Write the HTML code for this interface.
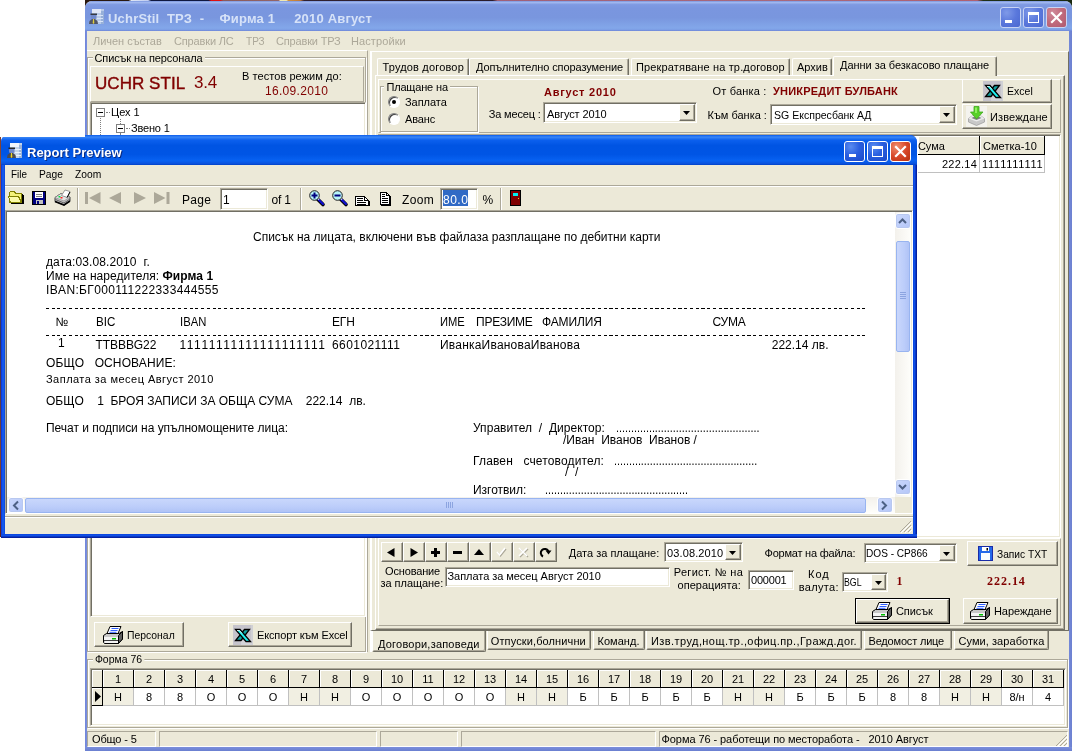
<!DOCTYPE html><html><head><meta charset="utf-8"><title>UchrStil</title><style>
html,body{margin:0;padding:0;}
body{width:1072px;height:751px;overflow:hidden;background:#fff;position:relative;font-family:"Liberation Sans",sans-serif;font-size:11px;color:#000;}
div,span.t{position:absolute;box-sizing:border-box;}
.t{white-space:pre;line-height:13px;font-size:11px;}
.raised{background:#ece9d8;border:1px solid;border-color:#fff #716f64 #716f64 #fff;box-shadow:inset -1px -1px 0 #aca899;}
.sunken{background:#fff;border:1px solid;border-color:#aca899 #fff #fff #aca899;box-shadow:inset 1px 1px 0 #716f64,inset -1px -1px 0 #ece9d8;}
.grp{border:1px solid #aca899;box-shadow:1px 1px 0 #fff, inset 1px 1px 0 #fff;}
.panel{border:1px solid;border-color:#fff #aca899 #aca899 #fff;}
.face{background:#ece9d8;}
.gl{background:#ece9d8;padding:0 2px;}
svg{position:absolute;overflow:visible;}
</style></head><body><div class="root" style="left:0;top:0;width:1072px;height:751px;will-change:transform;overflow:hidden;">
<div style="left:85px;top:0px;width:987px;height:8px;background:linear-gradient(90deg,#2a1810 0,#2a1810 4.4%,#dfe6f5 4.7%,#c0ccf0 6.4%,#101840 6.7%,#101840 12.5%,#e01010 12.8%,#e01010 13.7%,#8a5a5a 14%,#946468 19.6%,#f0e8b0 19.8%,#f0e8b0 20.4%,#d09040 20.6%,#c07838 21.8%,#302030 22.2%,#2a1c2c 41.3%,#a06078 41.8%,#a8687c 70%,#b06070 90.4%,#203018 91%,#182810 100%);"></div>
<div id="mainwin" style="left:85px;top:1px;width:987px;height:750px;background:#ece9d8;border-radius:7px 7px 0 0;"></div>
<div id="mtitle" style="left:85px;top:1px;width:987px;height:30px;border-radius:7px 7px 0 0;background:linear-gradient(180deg,#7b96df 0,#9fb6ee 5%,#7f9ae2 12%,#7a96df 25%,#7996de 55%,#82a6e9 88%,#80a4e8 94%,#6f86d8 100%);"></div>
<div style="left:85px;top:31px;width:2px;height:720px;background:linear-gradient(90deg,#7085d8,#7b90e0);"></div>
<div style="left:1069px;top:31px;width:3px;height:720px;background:linear-gradient(90deg,#7489d8,#6c80d0);"></div>
<div style="left:85px;top:747px;width:987px;height:4px;background:linear-gradient(180deg,#7b8fdc,#6a7fd0);"></div>
<svg style="left:89px;top:9px;opacity:0.85" width="16" height="16" viewBox="0 0 16 16"><rect x="3" y="0" width="12" height="15" fill="#c4d4ea"/><rect x="3" y="0" width="9" height="4" fill="#f2f6fc"/><rect x="12" y="2" width="3" height="13" fill="#9cb4d8"/><path d="M8 6.500H14M8 9.500H14M8 12.500H14" stroke="#eaf2fc" stroke-width="1"/><path d="M0 15 L0.500 12 L3 10 L6 10 L8.500 12 L9 15 Z" fill="#4a4a52"/><rect x="2" y="5" width="5.500" height="5" rx="1.500" fill="#7088c8"/><rect x="1.500" y="4.500" width="6.500" height="1.500" fill="#282828"/><path d="M4 10 L5 10 L5.300 14 L4.500 15 L3.700 14 Z" fill="#f0d820"/></svg>
<span id="mtitletext" class="t" style="left:108px;top:11px;font-size:13px;line-height:16px;font-weight:bold;letter-spacing:0.19px;color:#d6e2f8;">UchrStil  ТРЗ  -    Фирма 1     2010 Август</span>
<div style="left:1000px;top:7px;width:21px;height:21px;border:1px solid #c8d4f4;border-radius:3px;background:radial-gradient(circle at 30% 25%,#7f9ae8 0,#5a78dc 50%,#4a68d0 100%);"></div>
<div style="left:1005px;top:20px;width:7px;height:3px;background:#fff;"></div>
<div style="left:1023px;top:7px;width:21px;height:21px;border:1px solid #c8d4f4;border-radius:3px;background:radial-gradient(circle at 30% 25%,#7f9ae8 0,#5a78dc 50%,#4a68d0 100%);"></div>
<div style="left:1028px;top:12px;width:11px;height:11px;border:1px solid #fff;border-top-width:3px;"></div>
<div style="left:1046px;top:7px;width:21px;height:21px;border:1px solid #c8d4f4;border-radius:3px;background:radial-gradient(circle at 30% 25%,#cf8a9a 0,#c06a7c 50%,#b05a70 100%);"></div>
<svg style="left:1046px;top:7px" width="21" height="21" viewBox="0 0 21 21"><path d="M6 6 L15 15 M15 6 L6 15" stroke="#fff" stroke-width="2.200" stroke-linecap="square"/></svg>
<span class="t" style="left:93px;top:35px;letter-spacing:-0.03px;color:#aca899;">Личен състав</span>
<span class="t" style="left:174px;top:35px;letter-spacing:-0.15px;color:#aca899;">Справки ЛС</span>
<span class="t" style="left:246px;top:35px;transform-origin:0 0;transform:scaleX(0.9138);color:#aca899;">ТРЗ</span>
<span class="t" style="left:276px;top:35px;letter-spacing:-0.17px;color:#aca899;">Справки ТРЗ</span>
<span class="t" style="left:351px;top:35px;letter-spacing:0.1px;color:#aca899;">Настройки</span>
<div style="left:87px;top:50px;width:281px;height:602px;border-top:1px solid #fff;border-right:1px solid #aca899;"></div>
<div style="left:369.5px;top:51px;width:699.5px;height:580px;border-top:1px solid #fff;border-left:2px solid #fff;border-right:1px solid #716f64;border-bottom:1px solid #716f64;"></div>
<div style="left:369.5px;top:631px;width:2px;height:21px;background:#fff;"></div>
<div class="grp" style="left:87px;top:57px;width:279px;height:595px;"></div>
<span id="lg" class="t gl" style="left:92.5px;top:52px;letter-spacing:-0.11px;">Списък на персонала</span>
<div class="panel" style="left:90px;top:66px;width:274px;height:36px;"></div>
<span id="uchr" class="t" style="left:95px;top:74px;font-size:17px;line-height:20px;letter-spacing:0.05px;color:#800000;-webkit-text-stroke:0.400px #800000;">UCHR STIL</span>
<span id="v34" class="t" style="left:194px;top:73px;font-size:17px;line-height:20px;letter-spacing:-0.22px;color:#800000;">3.4</span>
<span id="vt" class="t" style="left:242px;top:70px;letter-spacing:0.06px;">В тестов режим до:</span>
<span id="dt" class="t" style="left:265px;top:84px;font-size:12px;line-height:14px;letter-spacing:0.31px;color:#800000;">16.09.2010</span>
<div class="sunken" style="left:90px;top:102px;width:276px;height:515px;"></div>
<div style="left:96px;top:108px;width:9px;height:9px;border:1px solid #808080;background:#fff;"></div>
<div style="left:98px;top:112px;width:5px;height:1px;background:#000;"></div>
<span id="ceh" class="t" style="left:111px;top:106px;">Цех 1</span>
<div style="left:116px;top:124px;width:9px;height:9px;border:1px solid #808080;background:#fff;"></div>
<div style="left:118px;top:128px;width:5px;height:1px;background:#000;"></div>
<span id="zv" class="t" style="left:131px;top:122px;letter-spacing:-0.18px;">Звено 1</span>
<div style="left:106px;top:112px;width:4px;height:1px;border-top:1px dotted #808080;"></div>
<div style="left:126px;top:128px;width:4px;height:1px;border-top:1px dotted #808080;"></div>
<div style="left:100px;top:118px;width:1px;height:17px;border-left:1px dotted #808080;"></div>
<div style="left:120px;top:119px;width:1px;height:5px;border-left:1px dotted #808080;"></div>
<div style="left:120px;top:133px;width:1px;height:2px;border-left:1px dotted #808080;"></div>
<div class="raised" style="left:94px;top:622px;width:90px;height:25px;"></div>
<div class="raised" style="left:228px;top:622px;width:124px;height:25px;"></div>
<svg style="left:103px;top:626px" width="20" height="18" viewBox="0 0 20 18"><path d="M0.500 9.500 L3.500 7.500 H16 L19.500 5.500 V13 L15.500 17.500 H1.500 L0.500 16.500 Z" fill="#c8c8c8" stroke="#000"/><path d="M15.500 9.500 L19.500 5.500 V13 L15.500 17.500 Z" fill="#606060" stroke="#000"/><rect x="1" y="11" width="14" height="3" fill="#f4f4f4"/><rect x="9" y="12" width="4" height="1.500" fill="#00c000"/><path d="M1 14.500H15" stroke="#404040"/><rect x="2" y="15" width="13" height="2" fill="#f4f4f4"/><path d="M7 0.500 H18 L15 7.500 H4 Z" fill="#fff" stroke="#000"/><path d="M8.500 2.500H15.500M7.500 4.500H14.500M6.500 6.300H13.500" stroke="#3060ff"/></svg>
<span id="pers" class="t" style="left:127px;top:629px;transform-origin:0 0;transform:scaleX(0.9445);">Персонал</span>
<svg style="left:233px;top:625px" width="20" height="20" viewBox="0 0 20 20"><rect x="0" y="0" width="20" height="20" fill="#c6c4cc"/><rect x="8" y="16" width="12" height="4" fill="#d4d4d8"/><rect x="18" y="0" width="2" height="20" fill="#d0d0d4"/><path d="M11.500 4.500 H16.500 L8 15.500 H2.500 Z" fill="#10a0a0" stroke="#000" stroke-width="1.300"/><path d="M2.500 4.500 H7 L17.500 16.500 H13 Z" fill="#20f0f0" stroke="#000" stroke-width="1.300"/><path d="M4 5.500 H6.500 L9 8.500" stroke="#fff" stroke-width="0.800" fill="none"/></svg>
<span id="exp" class="t" style="left:257px;top:629px;letter-spacing:-0.14px;">Експорт към Excel</span>
<div id="tabpage" class="face" style="left:375px;top:75px;width:690px;height:555px;border:1px solid;border-color:#fff #716f64 #716f64 #fff;box-shadow:inset -1px -1px 0 #aca899;"></div>
<div style="left:377px;top:58px;width:92px;height:17px;background:#ece9d8;border:1px solid;border-color:#fff #716f64 #ece9d8 #fff;border-bottom:none;border-radius:2px 2px 0 0;box-shadow:inset -1px 0 0 #aca899;"></div>
<span class="t" style="left:382.5px;top:61px;letter-spacing:0.17px;z-index:3;">Трудов договор</span>
<div style="left:469px;top:58px;width:160px;height:17px;background:#ece9d8;border:1px solid;border-color:#fff #716f64 #ece9d8 #fff;border-bottom:none;border-radius:2px 2px 0 0;box-shadow:inset -1px 0 0 #aca899;"></div>
<span class="t" style="left:476px;top:61px;letter-spacing:-0.1px;z-index:3;">Допълнително споразумение</span>
<div style="left:631px;top:58px;width:159px;height:17px;background:#ece9d8;border:1px solid;border-color:#fff #716f64 #ece9d8 #fff;border-bottom:none;border-radius:2px 2px 0 0;box-shadow:inset -1px 0 0 #aca899;"></div>
<span class="t" style="left:636px;top:61px;letter-spacing:0.15px;z-index:3;">Прекратяване на тр.договор</span>
<div style="left:792px;top:58px;width:40px;height:17px;background:#ece9d8;border:1px solid;border-color:#fff #716f64 #ece9d8 #fff;border-bottom:none;border-radius:2px 2px 0 0;box-shadow:inset -1px 0 0 #aca899;"></div>
<span class="t" style="left:797px;top:61px;z-index:3;">Архив</span>
<div style="left:833px;top:56px;width:164px;height:20px;background:#ece9d8;border:1px solid;border-color:#fff #716f64 #ece9d8 #fff;border-bottom:none;border-radius:2px 2px 0 0;box-shadow:inset -1px 0 0 #aca899;z-index:2;"></div>
<span class="t" style="left:840px;top:59px;letter-spacing:-0.03px;z-index:3;">Данни за безкасово плащане</span>
<div class="panel" style="left:378px;top:79px;width:683px;height:54px;"></div>
<div class="grp" style="left:379.5px;top:86px;width:98.5px;height:45.5px;"></div>
<span id="pl" class="t gl" style="left:384.4px;top:81px;letter-spacing:-0.16px;">Плащане на</span>
<div style="left:388px;top:96px;width:12px;height:12px;border-radius:50%;background:#fff;border:1px solid;border-color:#808080 #fff #fff #808080;box-shadow:inset 1px 1px 0 #404040;"></div>
<div style="left:392px;top:100px;width:4px;height:4px;border-radius:50%;background:#000;"></div>
<span class="t" style="left:405px;top:96px;letter-spacing:-0.05px;">Заплата</span>
<div style="left:388px;top:113px;width:12px;height:12px;border-radius:50%;background:#fff;border:1px solid;border-color:#808080 #fff #fff #808080;box-shadow:inset 1px 1px 0 #404040;"></div>
<span class="t" style="left:405px;top:113px;letter-spacing:-0.12px;">Аванс</span>
<span id="zam" class="t" style="left:488.75px;top:108px;letter-spacing:-0.17px;">За месец :</span>
<span id="avg" class="t" style="left:544px;top:86px;font-weight:bold;letter-spacing:0.76px;color:#800000;">Август 2010</span>
<div class="sunken" style="left:543px;top:102px;width:154px;height:21px;"></div>
<span class="t" style="left:547px;top:108px;letter-spacing:-0.09px;">Август 2010</span>
<div class="raised" style="left:679px;top:104px;width:16px;height:17px;"></div>
<svg style="left:683px;top:111px" width="7" height="4" viewBox="0 0 7 4"><path d="M0 0H7L3.500 4Z" fill="#000"/></svg>
<span id="otb" class="t" style="left:712.5px;top:85px;letter-spacing:0.17px;">От банка :</span>
<span id="uni" class="t" style="left:773px;top:85px;font-weight:bold;letter-spacing:0.21px;color:#800000;">УНИКРЕДИТ БУЛБАНК</span>
<span id="kum" class="t" style="left:707.5px;top:109px;">Към банка :</span>
<div class="sunken" style="left:770px;top:104px;width:187px;height:21px;"></div>
<span class="t" style="left:774px;top:109px;transform-origin:0 0;transform:scaleX(0.9583);">SG Експресбанк АД</span>
<div class="raised" style="left:939px;top:106px;width:16px;height:17px;"></div>
<svg style="left:943px;top:113px" width="7" height="4" viewBox="0 0 7 4"><path d="M0 0H7L3.500 4Z" fill="#000"/></svg>
<div class="raised" style="left:962px;top:79px;width:90px;height:24px;"></div>
<svg style="left:983px;top:81px" width="20" height="20" viewBox="0 0 20 20"><rect x="0" y="0" width="20" height="20" fill="#c6c4cc"/><rect x="8" y="16" width="12" height="4" fill="#d4d4d8"/><rect x="18" y="0" width="2" height="20" fill="#d0d0d4"/><path d="M11.500 4.500 H16.500 L8 15.500 H2.500 Z" fill="#10a0a0" stroke="#000" stroke-width="1.300"/><path d="M2.500 4.500 H7 L17.500 16.500 H13 Z" fill="#20f0f0" stroke="#000" stroke-width="1.300"/><path d="M4 5.500 H6.500 L9 8.500" stroke="#fff" stroke-width="0.800" fill="none"/></svg>
<span class="t" style="left:1006.5px;top:85px;transform-origin:0 0;transform:scaleX(0.9565);">Excel</span>
<div class="raised" style="left:962px;top:104px;width:90px;height:25px;"></div>
<svg style="left:966px;top:106px" width="21" height="21" viewBox="0 0 21 21"><rect width="21" height="21" fill="#f4f3ee"/><path d="M2.500 12.500 L6 10 H15 L18.500 12.500 V16 L10.500 19.500 L2.500 16 Z" fill="#c8c8c8" stroke="#a0a0a0" stroke-width="0.800"/><path d="M2.500 12.500 L10.500 15.500 L18.500 12.500 L15 10 H6 Z" fill="#ececec"/><path d="M5.500 12 L10.500 14 L15.500 12 L13.500 11 H7.500 Z" fill="#808080"/><path d="M8 0.500 H13 V6 H17 L10.500 13 L4.500 6 H8 Z" fill="#58d028" stroke="#40a820" stroke-width="0.800"/><path d="M9 1.500 H11 V7 H9 Z" fill="#90f060"/></svg>
<span class="t" style="left:990px;top:111px;letter-spacing:0.12px;">Извеждане</span>
<div id="grid1" class="sunken" style="left:378px;top:134px;width:683px;height:404px;"></div>
<div style="left:918px;top:136px;width:62px;height:19px;background:#ece9d8;border:1px solid #000;border-top:none;border-left:none;box-shadow:inset 1px 1px 0 #fff;"></div>
<div style="left:980px;top:136px;width:65px;height:19px;background:#ece9d8;border:1px solid #000;border-top:none;border-left:none;box-shadow:inset 1px 1px 0 #fff;"></div>
<span class="t" style="left:918px;top:140px;letter-spacing:-0.08px;">Сума</span>
<span class="t" style="left:983px;top:140px;letter-spacing:0.05px;">Сметка-10</span>
<div style="left:918px;top:155px;width:62px;height:18px;border-right:1px solid #c0c0c0;border-bottom:1px solid #c0c0c0;"></div>
<div style="left:980px;top:155px;width:65px;height:18px;border-right:1px solid #c0c0c0;border-bottom:1px solid #c0c0c0;"></div>
<span class="t" style="left:942px;top:158px;letter-spacing:0.22px;">222.14</span>
<span class="t" style="left:982px;top:158px;letter-spacing:0.76px;">1111111111</span>
<div class="panel" style="left:378px;top:538px;width:683px;height:88px;"></div>
<div class="raised" style="left:380.5px;top:542px;width:22px;height:20px;"></div>
<svg style="left:387px;top:548px" width="9" height="9"><path d="M7.500 0V9L0 4.500Z" fill="#000"/></svg>
<div class="raised" style="left:402.5px;top:542px;width:22px;height:20px;"></div>
<svg style="left:409px;top:548px" width="9" height="9"><path d="M1.500 0V9L9 4.500Z" fill="#000"/></svg>
<div class="raised" style="left:424.5px;top:542px;width:22px;height:20px;"></div>
<div style="left:431px;top:551px;width:9px;height:3px;background:#000;"></div>
<div style="left:434px;top:548px;width:3px;height:9px;background:#000;"></div>
<div class="raised" style="left:446.5px;top:542px;width:22px;height:20px;"></div>
<div style="left:453px;top:551px;width:9px;height:3px;background:#000;"></div>
<div class="raised" style="left:468.5px;top:542px;width:22px;height:20px;"></div>
<svg style="left:474px;top:549px" width="10" height="6"><path d="M0 6H10L5 0Z" fill="#000"/></svg>
<div class="raised" style="left:490.5px;top:542px;width:22px;height:20px;"></div>
<svg style="left:496px;top:547px" width="12" height="11"><path d="M2 6L4.500 9L10 2" stroke="#aca899" stroke-width="1.400" fill="none"/><path d="M1 5L3.500 8L9 1" stroke="#fff" stroke-width="1.600" fill="none"/></svg>
<div class="raised" style="left:512.5px;top:542px;width:22px;height:20px;"></div>
<svg style="left:518px;top:547px" width="12" height="12"><path d="M2 2L10 10M10 2L2 10" stroke="#aca899" stroke-width="1.400" fill="none"/><path d="M1 1L9 9M9 1L1 9" stroke="#fff" stroke-width="1.600" fill="none"/></svg>
<div class="raised" style="left:534.5px;top:542px;width:22px;height:20px;"></div>
<svg style="left:539px;top:546px" width="13" height="12" viewBox="0 0 13 12"><path d="M4 10.500A4 4 0 1 1 9.500 5.500" stroke="#000" stroke-width="2" fill="none"/><path d="M6.500 4.500H12.500L9.500 8.500Z" fill="#000"/></svg>
<span id="dzp" class="t" style="left:568.75px;top:547px;">Дата за плащане:</span>
<div class="sunken" style="left:663.5px;top:542px;width:79.5px;height:20px;"></div>
<span class="t" style="left:667px;top:547px;letter-spacing:0.13px;">03.08.2010</span>
<div class="raised" style="left:725px;top:544px;width:16px;height:16px;"></div>
<svg style="left:729px;top:551px" width="7" height="4" viewBox="0 0 7 4"><path d="M0 0H7L3.500 4Z" fill="#000"/></svg>
<span id="fnf" class="t" style="left:764.5px;top:547px;letter-spacing:-0.22px;">Формат на файла:</span>
<div class="sunken" style="left:863.5px;top:543px;width:93.5px;height:20px;"></div>
<span class="t" style="left:866px;top:547px;transform-origin:0 0;transform:scaleX(0.9171);">DOS - CP866</span>
<div class="raised" style="left:939px;top:545px;width:16px;height:16px;"></div>
<svg style="left:943px;top:552px" width="7" height="4" viewBox="0 0 7 4"><path d="M0 0H7L3.500 4Z" fill="#000"/></svg>
<div class="raised" style="left:966.5px;top:541px;width:91px;height:24.5px;"></div>
<svg style="left:978px;top:546px" width="15" height="15" viewBox="0 0 15 15"><rect x="0.500" y="0.500" width="14" height="14" fill="#2468ea" stroke="#1a2ca8"/><rect x="4" y="1" width="7" height="4" fill="#fff"/><rect x="8.500" y="2" width="1.500" height="2.500" fill="#000"/><rect x="3" y="7" width="9" height="7" fill="#fafcff"/></svg>
<span id="ztxt" class="t" style="left:996.5px;top:548px;transform-origin:0 0;transform:scaleX(0.9264);">Запис ТХТ</span>
<span id="osn1" class="t" style="left:385px;top:565px;letter-spacing:-0.15px;">Основание</span>
<span id="osn2" class="t" style="left:380.5px;top:577px;letter-spacing:-0.04px;">за плащане:</span>
<div class="sunken" style="left:445px;top:567px;width:225px;height:20px;"></div>
<span class="t" style="left:447.5px;top:570px;letter-spacing:-0.05px;">Заплата за месец Август 2010</span>
<span class="t" style="left:673.75px;top:566px;letter-spacing:0.31px;">Регист. № на</span>
<span class="t" style="left:677.5px;top:579px;letter-spacing:0.03px;">операцията:</span>
<div class="sunken" style="left:747.5px;top:570px;width:46.5px;height:20px;"></div>
<span class="t" style="left:751px;top:574px;letter-spacing:-0.2px;">000001</span>
<span class="t" style="left:808px;top:568px;letter-spacing:1.03px;">Код</span>
<span class="t" style="left:798.75px;top:581px;letter-spacing:0.32px;">валута:</span>
<div class="sunken" style="left:841.5px;top:572px;width:46.5px;height:20px;"></div>
<span class="t" style="left:844px;top:576px;transform-origin:0 0;transform:scaleX(0.7996);">BGL</span>
<div class="raised" style="left:871px;top:574px;width:15px;height:16px;"></div>
<svg style="left:875px;top:581px" width="7" height="4" viewBox="0 0 7 4"><path d="M0 0H7L3.500 4Z" fill="#000"/></svg>
<span class="t" style="left:896.5px;top:574px;font-size:12px;line-height:14px;font-weight:bold;font-family:'Liberation Serif',serif;color:#800000;">1</span>
<span class="t" style="left:987px;top:574px;font-size:12px;line-height:14px;font-weight:bold;font-family:'Liberation Serif',serif;letter-spacing:0.97px;color:#800000;">222.14</span>
<div style="left:855px;top:598px;width:95px;height:25.5px;border:1px solid #000;background:#ece9d8;"></div>
<div class="raised" style="left:856px;top:599px;width:93px;height:23.5px;"></div>
<svg style="left:872px;top:602px" width="20" height="18" viewBox="0 0 20 18"><path d="M0.500 9.500 L3.500 7.500 H16 L19.500 5.500 V13 L15.500 17.500 H1.500 L0.500 16.500 Z" fill="#c8c8c8" stroke="#000"/><path d="M15.500 9.500 L19.500 5.500 V13 L15.500 17.500 Z" fill="#606060" stroke="#000"/><rect x="1" y="11" width="14" height="3" fill="#f4f4f4"/><rect x="9" y="12" width="4" height="1.500" fill="#00c000"/><path d="M1 14.500H15" stroke="#404040"/><rect x="2" y="15" width="13" height="2" fill="#f4f4f4"/><path d="M7 0.500 H18 L15 7.500 H4 Z" fill="#fff" stroke="#000"/><path d="M8.500 2.500H15.500M7.500 4.500H14.500M6.500 6.300H13.500" stroke="#3060ff"/></svg>
<span class="t" style="left:896px;top:605px;letter-spacing:-0.09px;">Списък</span>
<div class="raised" style="left:962.75px;top:598px;width:95px;height:25.5px;"></div>
<svg style="left:970px;top:602px" width="20" height="18" viewBox="0 0 20 18"><path d="M0.500 9.500 L3.500 7.500 H16 L19.500 5.500 V13 L15.500 17.500 H1.500 L0.500 16.500 Z" fill="#c8c8c8" stroke="#000"/><path d="M15.500 9.500 L19.500 5.500 V13 L15.500 17.500 Z" fill="#606060" stroke="#000"/><rect x="1" y="11" width="14" height="3" fill="#f4f4f4"/><rect x="9" y="12" width="4" height="1.500" fill="#00c000"/><path d="M1 14.500H15" stroke="#404040"/><rect x="2" y="15" width="13" height="2" fill="#f4f4f4"/><path d="M7 0.500 H18 L15 7.500 H4 Z" fill="#fff" stroke="#000"/><path d="M8.500 2.500H15.500M7.500 4.500H14.500M6.500 6.300H13.500" stroke="#3060ff"/></svg>
<span class="t" style="left:994px;top:605px;letter-spacing:-0.07px;">Нареждане</span>
<div style="left:371.5px;top:631px;width:114.5px;height:21px;background:#ece9d8;border:1px solid;border-color:#ece9d8 #716f64 #716f64 #fff;border-top:none;border-radius:0 0 2px 2px;box-shadow:inset -1px -1px 0 #aca899;z-index:2;"></div>
<span class="t" style="left:378px;top:638px;letter-spacing:0.21px;z-index:3;">Договори,заповеди</span>
<div style="left:487px;top:631px;width:104px;height:19px;background:#ece9d8;border:1px solid;border-color:#ece9d8 #716f64 #716f64 #fff;border-top:none;border-radius:0 0 2px 2px;box-shadow:inset -1px -1px 0 #aca899;"></div>
<span class="t" style="left:490.75px;top:635px;letter-spacing:0.12px;z-index:3;">Отпуски,болнични</span>
<div style="left:592.5px;top:631px;width:52px;height:19px;background:#ece9d8;border:1px solid;border-color:#ece9d8 #716f64 #716f64 #fff;border-top:none;border-radius:0 0 2px 2px;box-shadow:inset -1px -1px 0 #aca899;"></div>
<span class="t" style="left:597.5px;top:635px;letter-spacing:0.04px;z-index:3;">Команд.</span>
<div style="left:646px;top:631px;width:215.5px;height:19px;background:#ece9d8;border:1px solid;border-color:#ece9d8 #716f64 #716f64 #fff;border-top:none;border-radius:0 0 2px 2px;box-shadow:inset -1px -1px 0 #aca899;"></div>
<span class="t" style="left:651px;top:635px;letter-spacing:0.43px;z-index:3;">Изв.труд,нощ.тр.,офиц.пр.,Гражд.дог.</span>
<div style="left:864px;top:631px;width:87.5px;height:19px;background:#ece9d8;border:1px solid;border-color:#ece9d8 #716f64 #716f64 #fff;border-top:none;border-radius:0 0 2px 2px;box-shadow:inset -1px -1px 0 #aca899;"></div>
<span class="t" style="left:868.5px;top:635px;letter-spacing:-0.18px;z-index:3;">Ведомост лице</span>
<div style="left:954px;top:631px;width:95px;height:19px;background:#ece9d8;border:1px solid;border-color:#ece9d8 #716f64 #716f64 #fff;border-top:none;border-radius:0 0 2px 2px;box-shadow:inset -1px -1px 0 #aca899;"></div>
<span class="t" style="left:958.5px;top:635px;letter-spacing:0.06px;z-index:3;">Суми, заработка</span>
<div class="grp" style="left:87px;top:659px;width:981px;height:69px;"></div>
<span id="f76" class="t gl" style="left:92.5px;top:653px;transform-origin:0 0;transform:scaleX(0.9521);">Форма 76</span>
<div class="sunken" style="left:90px;top:668px;width:976px;height:58px;"></div>
<div style="left:92px;top:670px;width:11px;height:18px;background:#ece9d8;border-right:1px solid #000;border-bottom:1px solid #000;box-shadow:inset 1px 1px 0 #fff;"></div>
<div style="left:92px;top:688px;width:11px;height:18px;background:#ece9d8;border-right:1px solid #000;border-bottom:1px solid #000;box-shadow:inset 1px 1px 0 #fff;"></div>
<svg style="left:95px;top:691px" width="6" height="11"><path d="M0 0V11L6 5.500Z" fill="#000"/></svg>
<div style="left:103px;top:670px;width:31px;height:18px;background:#ece9d8;border-right:1px solid #000;border-bottom:1px solid #000;box-shadow:inset 1px 1px 0 #fff;text-align:center;line-height:18px;">1</div>
<div style="left:103px;top:688px;width:31px;height:18px;background:#f1efe2;border-right:1px solid #c0c0c0;border-bottom:1px solid #c0c0c0;text-align:center;line-height:19px;">Н</div>
<div style="left:134px;top:670px;width:31px;height:18px;background:#ece9d8;border-right:1px solid #000;border-bottom:1px solid #000;box-shadow:inset 1px 1px 0 #fff;text-align:center;line-height:18px;">2</div>
<div style="left:134px;top:688px;width:31px;height:18px;background:#fff;border-right:1px solid #c0c0c0;border-bottom:1px solid #c0c0c0;text-align:center;line-height:19px;">8</div>
<div style="left:165px;top:670px;width:31px;height:18px;background:#ece9d8;border-right:1px solid #000;border-bottom:1px solid #000;box-shadow:inset 1px 1px 0 #fff;text-align:center;line-height:18px;">3</div>
<div style="left:165px;top:688px;width:31px;height:18px;background:#fff;border-right:1px solid #c0c0c0;border-bottom:1px solid #c0c0c0;text-align:center;line-height:19px;">8</div>
<div style="left:196px;top:670px;width:31px;height:18px;background:#ece9d8;border-right:1px solid #000;border-bottom:1px solid #000;box-shadow:inset 1px 1px 0 #fff;text-align:center;line-height:18px;">4</div>
<div style="left:196px;top:688px;width:31px;height:18px;background:#fff;border-right:1px solid #c0c0c0;border-bottom:1px solid #c0c0c0;text-align:center;line-height:19px;">О</div>
<div style="left:227px;top:670px;width:31px;height:18px;background:#ece9d8;border-right:1px solid #000;border-bottom:1px solid #000;box-shadow:inset 1px 1px 0 #fff;text-align:center;line-height:18px;">5</div>
<div style="left:227px;top:688px;width:31px;height:18px;background:#fff;border-right:1px solid #c0c0c0;border-bottom:1px solid #c0c0c0;text-align:center;line-height:19px;">О</div>
<div style="left:258px;top:670px;width:31px;height:18px;background:#ece9d8;border-right:1px solid #000;border-bottom:1px solid #000;box-shadow:inset 1px 1px 0 #fff;text-align:center;line-height:18px;">6</div>
<div style="left:258px;top:688px;width:31px;height:18px;background:#fff;border-right:1px solid #c0c0c0;border-bottom:1px solid #c0c0c0;text-align:center;line-height:19px;">О</div>
<div style="left:289px;top:670px;width:31px;height:18px;background:#ece9d8;border-right:1px solid #000;border-bottom:1px solid #000;box-shadow:inset 1px 1px 0 #fff;text-align:center;line-height:18px;">7</div>
<div style="left:289px;top:688px;width:31px;height:18px;background:#f1efe2;border-right:1px solid #c0c0c0;border-bottom:1px solid #c0c0c0;text-align:center;line-height:19px;">Н</div>
<div style="left:320px;top:670px;width:31px;height:18px;background:#ece9d8;border-right:1px solid #000;border-bottom:1px solid #000;box-shadow:inset 1px 1px 0 #fff;text-align:center;line-height:18px;">8</div>
<div style="left:320px;top:688px;width:31px;height:18px;background:#f1efe2;border-right:1px solid #c0c0c0;border-bottom:1px solid #c0c0c0;text-align:center;line-height:19px;">Н</div>
<div style="left:351px;top:670px;width:31px;height:18px;background:#ece9d8;border-right:1px solid #000;border-bottom:1px solid #000;box-shadow:inset 1px 1px 0 #fff;text-align:center;line-height:18px;">9</div>
<div style="left:351px;top:688px;width:31px;height:18px;background:#fff;border-right:1px solid #c0c0c0;border-bottom:1px solid #c0c0c0;text-align:center;line-height:19px;">О</div>
<div style="left:382px;top:670px;width:31px;height:18px;background:#ece9d8;border-right:1px solid #000;border-bottom:1px solid #000;box-shadow:inset 1px 1px 0 #fff;text-align:center;line-height:18px;">10</div>
<div style="left:382px;top:688px;width:31px;height:18px;background:#fff;border-right:1px solid #c0c0c0;border-bottom:1px solid #c0c0c0;text-align:center;line-height:19px;">О</div>
<div style="left:413px;top:670px;width:31px;height:18px;background:#ece9d8;border-right:1px solid #000;border-bottom:1px solid #000;box-shadow:inset 1px 1px 0 #fff;text-align:center;line-height:18px;">11</div>
<div style="left:413px;top:688px;width:31px;height:18px;background:#fff;border-right:1px solid #c0c0c0;border-bottom:1px solid #c0c0c0;text-align:center;line-height:19px;">О</div>
<div style="left:444px;top:670px;width:31px;height:18px;background:#ece9d8;border-right:1px solid #000;border-bottom:1px solid #000;box-shadow:inset 1px 1px 0 #fff;text-align:center;line-height:18px;">12</div>
<div style="left:444px;top:688px;width:31px;height:18px;background:#fff;border-right:1px solid #c0c0c0;border-bottom:1px solid #c0c0c0;text-align:center;line-height:19px;">О</div>
<div style="left:475px;top:670px;width:31px;height:18px;background:#ece9d8;border-right:1px solid #000;border-bottom:1px solid #000;box-shadow:inset 1px 1px 0 #fff;text-align:center;line-height:18px;">13</div>
<div style="left:475px;top:688px;width:31px;height:18px;background:#fff;border-right:1px solid #c0c0c0;border-bottom:1px solid #c0c0c0;text-align:center;line-height:19px;">О</div>
<div style="left:506px;top:670px;width:31px;height:18px;background:#ece9d8;border-right:1px solid #000;border-bottom:1px solid #000;box-shadow:inset 1px 1px 0 #fff;text-align:center;line-height:18px;">14</div>
<div style="left:506px;top:688px;width:31px;height:18px;background:#f1efe2;border-right:1px solid #c0c0c0;border-bottom:1px solid #c0c0c0;text-align:center;line-height:19px;">Н</div>
<div style="left:537px;top:670px;width:31px;height:18px;background:#ece9d8;border-right:1px solid #000;border-bottom:1px solid #000;box-shadow:inset 1px 1px 0 #fff;text-align:center;line-height:18px;">15</div>
<div style="left:537px;top:688px;width:31px;height:18px;background:#f1efe2;border-right:1px solid #c0c0c0;border-bottom:1px solid #c0c0c0;text-align:center;line-height:19px;">Н</div>
<div style="left:568px;top:670px;width:31px;height:18px;background:#ece9d8;border-right:1px solid #000;border-bottom:1px solid #000;box-shadow:inset 1px 1px 0 #fff;text-align:center;line-height:18px;">16</div>
<div style="left:568px;top:688px;width:31px;height:18px;background:#fff;border-right:1px solid #c0c0c0;border-bottom:1px solid #c0c0c0;text-align:center;line-height:19px;">Б</div>
<div style="left:599px;top:670px;width:31px;height:18px;background:#ece9d8;border-right:1px solid #000;border-bottom:1px solid #000;box-shadow:inset 1px 1px 0 #fff;text-align:center;line-height:18px;">17</div>
<div style="left:599px;top:688px;width:31px;height:18px;background:#fff;border-right:1px solid #c0c0c0;border-bottom:1px solid #c0c0c0;text-align:center;line-height:19px;">Б</div>
<div style="left:630px;top:670px;width:31px;height:18px;background:#ece9d8;border-right:1px solid #000;border-bottom:1px solid #000;box-shadow:inset 1px 1px 0 #fff;text-align:center;line-height:18px;">18</div>
<div style="left:630px;top:688px;width:31px;height:18px;background:#fff;border-right:1px solid #c0c0c0;border-bottom:1px solid #c0c0c0;text-align:center;line-height:19px;">Б</div>
<div style="left:661px;top:670px;width:31px;height:18px;background:#ece9d8;border-right:1px solid #000;border-bottom:1px solid #000;box-shadow:inset 1px 1px 0 #fff;text-align:center;line-height:18px;">19</div>
<div style="left:661px;top:688px;width:31px;height:18px;background:#fff;border-right:1px solid #c0c0c0;border-bottom:1px solid #c0c0c0;text-align:center;line-height:19px;">Б</div>
<div style="left:692px;top:670px;width:31px;height:18px;background:#ece9d8;border-right:1px solid #000;border-bottom:1px solid #000;box-shadow:inset 1px 1px 0 #fff;text-align:center;line-height:18px;">20</div>
<div style="left:692px;top:688px;width:31px;height:18px;background:#fff;border-right:1px solid #c0c0c0;border-bottom:1px solid #c0c0c0;text-align:center;line-height:19px;">Б</div>
<div style="left:723px;top:670px;width:31px;height:18px;background:#ece9d8;border-right:1px solid #000;border-bottom:1px solid #000;box-shadow:inset 1px 1px 0 #fff;text-align:center;line-height:18px;">21</div>
<div style="left:723px;top:688px;width:31px;height:18px;background:#f1efe2;border-right:1px solid #c0c0c0;border-bottom:1px solid #c0c0c0;text-align:center;line-height:19px;">Н</div>
<div style="left:754px;top:670px;width:31px;height:18px;background:#ece9d8;border-right:1px solid #000;border-bottom:1px solid #000;box-shadow:inset 1px 1px 0 #fff;text-align:center;line-height:18px;">22</div>
<div style="left:754px;top:688px;width:31px;height:18px;background:#f1efe2;border-right:1px solid #c0c0c0;border-bottom:1px solid #c0c0c0;text-align:center;line-height:19px;">Н</div>
<div style="left:785px;top:670px;width:31px;height:18px;background:#ece9d8;border-right:1px solid #000;border-bottom:1px solid #000;box-shadow:inset 1px 1px 0 #fff;text-align:center;line-height:18px;">23</div>
<div style="left:785px;top:688px;width:31px;height:18px;background:#fff;border-right:1px solid #c0c0c0;border-bottom:1px solid #c0c0c0;text-align:center;line-height:19px;">Б</div>
<div style="left:816px;top:670px;width:31px;height:18px;background:#ece9d8;border-right:1px solid #000;border-bottom:1px solid #000;box-shadow:inset 1px 1px 0 #fff;text-align:center;line-height:18px;">24</div>
<div style="left:816px;top:688px;width:31px;height:18px;background:#fff;border-right:1px solid #c0c0c0;border-bottom:1px solid #c0c0c0;text-align:center;line-height:19px;">Б</div>
<div style="left:847px;top:670px;width:31px;height:18px;background:#ece9d8;border-right:1px solid #000;border-bottom:1px solid #000;box-shadow:inset 1px 1px 0 #fff;text-align:center;line-height:18px;">25</div>
<div style="left:847px;top:688px;width:31px;height:18px;background:#fff;border-right:1px solid #c0c0c0;border-bottom:1px solid #c0c0c0;text-align:center;line-height:19px;">Б</div>
<div style="left:878px;top:670px;width:31px;height:18px;background:#ece9d8;border-right:1px solid #000;border-bottom:1px solid #000;box-shadow:inset 1px 1px 0 #fff;text-align:center;line-height:18px;">26</div>
<div style="left:878px;top:688px;width:31px;height:18px;background:#fff;border-right:1px solid #c0c0c0;border-bottom:1px solid #c0c0c0;text-align:center;line-height:19px;">8</div>
<div style="left:909px;top:670px;width:31px;height:18px;background:#ece9d8;border-right:1px solid #000;border-bottom:1px solid #000;box-shadow:inset 1px 1px 0 #fff;text-align:center;line-height:18px;">27</div>
<div style="left:909px;top:688px;width:31px;height:18px;background:#fff;border-right:1px solid #c0c0c0;border-bottom:1px solid #c0c0c0;text-align:center;line-height:19px;">8</div>
<div style="left:940px;top:670px;width:31px;height:18px;background:#ece9d8;border-right:1px solid #000;border-bottom:1px solid #000;box-shadow:inset 1px 1px 0 #fff;text-align:center;line-height:18px;">28</div>
<div style="left:940px;top:688px;width:31px;height:18px;background:#f1efe2;border-right:1px solid #c0c0c0;border-bottom:1px solid #c0c0c0;text-align:center;line-height:19px;">Н</div>
<div style="left:971px;top:670px;width:31px;height:18px;background:#ece9d8;border-right:1px solid #000;border-bottom:1px solid #000;box-shadow:inset 1px 1px 0 #fff;text-align:center;line-height:18px;">29</div>
<div style="left:971px;top:688px;width:31px;height:18px;background:#f1efe2;border-right:1px solid #c0c0c0;border-bottom:1px solid #c0c0c0;text-align:center;line-height:19px;">Н</div>
<div style="left:1002px;top:670px;width:31px;height:18px;background:#ece9d8;border-right:1px solid #000;border-bottom:1px solid #000;box-shadow:inset 1px 1px 0 #fff;text-align:center;line-height:18px;">30</div>
<div style="left:1002px;top:688px;width:31px;height:18px;background:#fff;border-right:1px solid #c0c0c0;border-bottom:1px solid #c0c0c0;text-align:center;line-height:19px;">8/н</div>
<div style="left:1033px;top:670px;width:31px;height:18px;background:#ece9d8;border-right:1px solid #000;border-bottom:1px solid #000;box-shadow:inset 1px 1px 0 #fff;text-align:center;line-height:18px;">31</div>
<div style="left:1033px;top:688px;width:31px;height:18px;background:#fff;border-right:1px solid #c0c0c0;border-bottom:1px solid #c0c0c0;text-align:center;line-height:19px;">4</div>
<div class="face" style="left:87px;top:729px;width:982px;height:18px;"></div>
<div style="left:87px;top:731px;width:69px;height:16px;border:1px solid;border-color:#aca899 #fff #fff #aca899;"></div>
<div style="left:159px;top:731px;width:218px;height:16px;border:1px solid;border-color:#aca899 #fff #fff #aca899;"></div>
<div style="left:380px;top:731px;width:78px;height:16px;border:1px solid;border-color:#aca899 #fff #fff #aca899;"></div>
<div style="left:461px;top:731px;width:195px;height:16px;border:1px solid;border-color:#aca899 #fff #fff #aca899;"></div>
<div style="left:659px;top:731px;width:409px;height:16px;border:1px solid;border-color:#aca899 #fff #fff #aca899;"></div>
<span class="t" style="left:92px;top:733px;letter-spacing:-0.15px;">Общо - 5</span>
<span id="sbt" class="t" style="left:661.5px;top:733px;letter-spacing:-0.07px;">Форма 76 - работещи по месторабота -   2010 Август</span>
<svg style="left:1055px;top:734px" width="13" height="13"><path d="M12 1L1 12M12 5L5 12M12 9L9 12" stroke="#aca899" stroke-width="1"/><path d="M13 2L2 13M13 6L6 13M13 10L10 13" stroke="#fff" stroke-width="1"/></svg>
<div id="rwin" style="left:1px;top:135px;width:916px;height:403px;background:#0a3fd0;border-radius:7px 7px 0 0;"></div>
<div id="rtitle" style="left:1px;top:135px;width:916px;height:30px;border-radius:7px 7px 0 0;background:linear-gradient(180deg,#0a5cec 0,#3a86f6 7%,#0c60ee 17%,#0054e3 35%,#0055e5 65%,#0862f2 86%,#0a52de 95%,#0042c8 100%);"></div>
<div style="left:1px;top:165px;width:4px;height:373px;background:linear-gradient(90deg,#0831d9,#1660f0 50%,#0a44dc);"></div>
<div style="left:913px;top:165px;width:4px;height:373px;background:linear-gradient(90deg,#0a44dc,#1050e8 40%,#00138c);"></div>
<div style="left:1px;top:534px;width:916px;height:4px;background:linear-gradient(180deg,#0a44dc,#1050e8 40%,#00138c);"></div>
<div id="rclient" class="face" style="left:5px;top:165px;width:908px;height:369px;"></div>
<svg style="left:7px;top:143px;opacity:1" width="16" height="16" viewBox="0 0 16 16"><rect x="3" y="0" width="12" height="15" fill="#c4d4ea"/><rect x="3" y="0" width="9" height="4" fill="#f2f6fc"/><rect x="12" y="2" width="3" height="13" fill="#9cb4d8"/><path d="M8 6.500H14M8 9.500H14M8 12.500H14" stroke="#eaf2fc" stroke-width="1"/><path d="M0 15 L0.500 12 L3 10 L6 10 L8.500 12 L9 15 Z" fill="#4a4a52"/><rect x="2" y="5" width="5.500" height="5" rx="1.500" fill="#7088c8"/><rect x="1.500" y="4.500" width="6.500" height="1.500" fill="#282828"/><path d="M4 10 L5 10 L5.300 14 L4.500 15 L3.700 14 Z" fill="#f0d820"/></svg>
<span id="rtt" class="t" style="left:27px;top:145px;font-size:13px;line-height:16px;font-weight:bold;color:#fff;text-shadow:1px 1px 0 #0a2a80;">Report Preview</span>
<div style="left:844px;top:141px;width:21px;height:21px;border:1px solid #fff;border-radius:3px;background:radial-gradient(circle at 30% 25%,#5a8cf0 0,#2a5fe0 45%,#1a48c8 100%);"></div>
<div style="left:849px;top:154px;width:7px;height:3px;background:#fff;"></div>
<div style="left:867px;top:141px;width:21px;height:21px;border:1px solid #fff;border-radius:3px;background:radial-gradient(circle at 30% 25%,#5a8cf0 0,#2a5fe0 45%,#1a48c8 100%);"></div>
<div style="left:872px;top:146px;width:11px;height:11px;border:1px solid #fff;border-top-width:3px;"></div>
<div style="left:890px;top:141px;width:21px;height:21px;border:1px solid #fff;border-radius:3px;background:radial-gradient(circle at 30% 25%,#f09070 0,#d8482a 50%,#b8300e 100%);"></div>
<svg style="left:890px;top:141px" width="21" height="21" viewBox="0 0 21 21"><path d="M6 6 L15 15 M15 6 L6 15" stroke="#fff" stroke-width="2.200" stroke-linecap="square"/></svg>
<span id="mf" class="t" style="left:10.5px;top:168px;transform-origin:0 0;transform:scaleX(0.8998);">File</span>
<span id="mp" class="t" style="left:38.75px;top:168px;transform-origin:0 0;transform:scaleX(0.9319);">Page</span>
<span id="mz" class="t" style="left:74.5px;top:168px;transform-origin:0 0;transform:scaleX(0.9322);">Zoom</span>
<div style="left:5px;top:185px;width:908px;height:1px;background:#aca899;"></div>
<div style="left:5px;top:186px;width:908px;height:1px;background:#fff;"></div>
<svg shape-rendering="crispEdges" style="left:8px;top:190px" width="16" height="14" viewBox="0 0 16 14"><path d="M3 13.500H15.500M14.500 4V13.500" stroke="#000" stroke-width="1" fill="none"/><path d="M15.500 5V13.500" stroke="#000" stroke-width="1"/><path d="M1.500 12.500 V2.500 L2.500 1.500 H6.500 L7.500 3.500 H13.500 V12.500 Z" fill="#f4f27a" stroke="#808000" stroke-width="1"/><path d="M0.500 6.500 H10.500 L13.500 12.500 H2.500 Z" fill="#fbfba8" stroke="#808000" stroke-width="1"/></svg>
<svg shape-rendering="crispEdges" style="left:32px;top:191px" width="14" height="14" viewBox="0 0 14 14"><rect x="0.500" y="0.500" width="13" height="13" fill="#000080" stroke="#000" stroke-width="1"/><rect x="3" y="1" width="8" height="6" fill="#fff"/><path d="M4 3.500H10M4 5.500H10" stroke="#808080"/><rect x="4" y="9" width="7" height="4" fill="#c0c0c0"/><rect x="5" y="10" width="2" height="3" fill="#000080"/></svg>
<svg style="left:54px;top:189px" width="17" height="17" viewBox="0 0 17 17"><path d="M1 8.500 L7 4.500 L16 8 L16 12 L10 16 L1 12.500 Z" fill="#c4c4c4" stroke="#404040" stroke-width="1"/><path d="M1 8.500 L7 4.500 L16 8 L10 12 Z" fill="#e4e4e4" stroke="#808080" stroke-width="0.600"/><path d="M1 12.500 L10 16 L16 12" stroke="#000" stroke-width="1.600" fill="none"/><path d="M1.500 10.500 L10 14 L16 10" stroke="#606060" stroke-width="1" fill="none"/><path d="M7.500 6.500 L11 1 L16 2.500 L13.500 8.500 Z" fill="#fff" stroke="#808080" stroke-width="0.800"/><path d="M13 8.500 L16 3" stroke="#000" stroke-width="1"/><rect x="4.500" y="7" width="2" height="1.500" fill="#00e040"/><rect x="6.500" y="8" width="2" height="1.500" fill="#ff2020"/></svg>
<div style="left:77px;top:188px;width:1px;height:22px;background:#aca899;"></div>
<div style="left:78px;top:188px;width:1px;height:22px;background:#fff;"></div>
<svg style="left:85px;top:192px" width="86" height="12" viewBox="0 0 86 12"><rect x="0" y="0" width="3" height="12" fill="#aca899"/><path d="M15.500 0V12L4 6Z" fill="#aca899"/><path d="M36 0V12L24 6Z" fill="#aca899"/><path d="M49 0V12L61 6Z" fill="#aca899"/><path d="M69 0V12L80.500 6Z" fill="#aca899"/><rect x="81.500" y="0" width="3" height="12" fill="#aca899"/></svg>
<span id="tpage" class="t" style="left:182px;top:193px;font-size:12px;line-height:14px;letter-spacing:0.27px;">Page</span>
<div class="sunken" style="left:219.5px;top:188px;width:48.5px;height:21.5px;"></div>
<span class="t" style="left:223px;top:193px;font-size:12px;line-height:14px;">1</span>
<span id="of1" class="t" style="left:271.5px;top:193px;font-size:12px;line-height:14px;letter-spacing:-0.22px;">of 1</span>
<div style="left:300px;top:188px;width:1px;height:22px;background:#aca899;"></div>
<div style="left:301px;top:188px;width:1px;height:22px;background:#fff;"></div>
<svg style="left:309px;top:190px" width="16" height="17" viewBox="0 0 16 17"><path d="M8 8.500L14 14.500" stroke="#000" stroke-width="3.600" stroke-linecap="round"/><path d="M8.500 8.500L14 14" stroke="#1010d0" stroke-width="2.200" stroke-linecap="round"/><path d="M8.500 8L10 9.500" stroke="#fff" stroke-width="1.400"/><circle cx="5.500" cy="5.500" r="4.800" fill="#b8f4f8" stroke="#202020" stroke-width="1"/><path d="M2.500 5.500H8.500" stroke="#000080" stroke-width="2"/><path d="M5.500 2.500V8.500" stroke="#000080" stroke-width="2"/></svg>
<svg style="left:332px;top:190px" width="16" height="17" viewBox="0 0 16 17"><path d="M8 8.500L14 14.500" stroke="#000" stroke-width="3.600" stroke-linecap="round"/><path d="M8.500 8.500L14 14" stroke="#1010d0" stroke-width="2.200" stroke-linecap="round"/><path d="M8.500 8L10 9.500" stroke="#fff" stroke-width="1.400"/><circle cx="5.500" cy="5.500" r="4.800" fill="#b8f4f8" stroke="#202020" stroke-width="1"/><path d="M2.500 5.500H8.500" stroke="#000080" stroke-width="2"/></svg>
<svg shape-rendering="crispEdges" style="left:355px;top:196px" width="15" height="10" viewBox="0 0 15 10"><path d="M0.500 9.500V0.500H9.500L13.500 4.500V9.500Z" fill="#fff" stroke="#000"/><path d="M9.500 0.500V4.500H13.500" fill="none" stroke="#000"/><path d="M2 2.500H8M2 4.500H8M2 6.500H11M2 8.500H11" stroke="#000"/><path d="M14.500 5V10" stroke="#000"/></svg>
<svg shape-rendering="crispEdges" style="left:380px;top:192px" width="11" height="14" viewBox="0 0 11 14"><path d="M0.500 0.500H6.500L9.500 3.500V12.500H0.500Z" fill="#fff" stroke="#000"/><path d="M6.500 0.500V3.500H9.500" fill="none" stroke="#000"/><path d="M2 2.500H5M2 4.500H5M2 6.500H8M2 8.500H8M2 10.500H8" stroke="#000"/><path d="M10.500 4V13.500H1" stroke="#000" fill="none"/></svg>
<span id="tzoom" class="t" style="left:402px;top:193px;font-size:12px;line-height:14px;letter-spacing:0.39px;">Zoom</span>
<div class="sunken" style="left:439.5px;top:188px;width:38px;height:21.5px;"></div>
<div style="left:442.5px;top:190px;width:25px;height:16px;background:#316ac5;"></div>
<span id="z80" class="t" style="left:443px;top:193px;font-size:12px;line-height:14px;letter-spacing:0.5px;color:#fff;">80.0</span>
<span class="t" style="left:482.5px;top:193px;font-size:12px;line-height:14px;">%</span>
<div style="left:500px;top:188px;width:1px;height:22px;background:#aca899;"></div>
<div style="left:501px;top:188px;width:1px;height:22px;background:#fff;"></div>
<svg shape-rendering="crispEdges" style="left:510px;top:190px" width="11" height="16" viewBox="0 0 11 16"><rect x="0.500" y="0.500" width="10" height="15" fill="#800000" stroke="#000"/><rect x="3" y="3" width="5" height="3" fill="#00f0f0"/><rect x="8" y="8" width="1" height="1" fill="#f0d020"/></svg>
<div class="sunken" style="left:5px;top:210px;width:908px;height:304px;"></div>
<div id="page" style="left:7px;top:212px;width:888px;height:285px;background:#fff;"></div>
<div style="left:895px;top:212px;width:16px;height:285px;background:linear-gradient(90deg,#f3f1ec,#fefefb);"></div>
<div style="left:894.5px;top:212.5px;width:16px;height:16px;border:1px solid #fff;border-radius:3px;background:linear-gradient(135deg,#cbd8fc,#b4c6f8);box-shadow:inset 0 0 0 1px #b8c8f0;"></div>
<svg style="left:898px;top:217px" width="9" height="7"><path d="M1 6L4.500 2.500L8 6" stroke="#4d6185" stroke-width="2" fill="none"/></svg>
<div style="left:894.5px;top:479px;width:16px;height:16px;border:1px solid #fff;border-radius:3px;background:linear-gradient(135deg,#cbd8fc,#b4c6f8);box-shadow:inset 0 0 0 1px #b8c8f0;"></div>
<svg style="left:898px;top:483.5px" width="9" height="7"><path d="M1 1L4.500 4.500L8 1" stroke="#4d6185" stroke-width="2" fill="none"/></svg>
<div style="left:895.5px;top:240.5px;width:14.5px;height:111px;border:1px solid #98b4f0;border-radius:2px;background:linear-gradient(90deg,#c9d7fc,#bccdfa 60%,#b0c3f6);"></div>
<div style="left:900px;top:292px;width:6px;height:1px;background:#8ca4e0;"></div>
<div style="left:900px;top:294px;width:6px;height:1px;background:#8ca4e0;"></div>
<div style="left:900px;top:296px;width:6px;height:1px;background:#8ca4e0;"></div>
<div style="left:900px;top:298px;width:6px;height:1px;background:#8ca4e0;"></div>
<div style="left:7px;top:497px;width:888px;height:16px;background:linear-gradient(180deg,#f3f1ec,#fefefb);"></div>
<div style="left:7.5px;top:497px;width:16px;height:16px;border:1px solid #fff;border-radius:3px;background:linear-gradient(135deg,#cbd8fc,#b4c6f8);box-shadow:inset 0 0 0 1px #b8c8f0;"></div>
<svg style="left:11.5px;top:500.5px" width="7" height="9"><path d="M6 0.500L2 4.500L6 8.500" stroke="#4d6185" stroke-width="2" fill="none"/></svg>
<div style="left:877px;top:497px;width:16px;height:16px;border:1px solid #fff;border-radius:3px;background:linear-gradient(135deg,#cbd8fc,#b4c6f8);box-shadow:inset 0 0 0 1px #b8c8f0;"></div>
<svg style="left:881px;top:500.5px" width="7" height="9"><path d="M1 0.500L5 4.500L1 8.500" stroke="#4d6185" stroke-width="2" fill="none"/></svg>
<div style="left:25px;top:497.5px;width:841px;height:15px;border:1px solid #98b4f0;border-radius:2px;background:linear-gradient(180deg,#c9d7fc,#bccdfa 60%,#b0c3f6);"></div>
<div style="left:446px;top:502px;width:1px;height:6px;background:#8ca4e0;"></div>
<div style="left:448px;top:502px;width:1px;height:6px;background:#8ca4e0;"></div>
<div style="left:450px;top:502px;width:1px;height:6px;background:#8ca4e0;"></div>
<div style="left:452px;top:502px;width:1px;height:6px;background:#8ca4e0;"></div>
<div style="left:895px;top:497px;width:16px;height:16px;background:#ece9d8;"></div>
<div style="left:5px;top:516px;width:908px;height:1px;background:#aca899;"></div>
<div style="left:5px;top:517px;width:908px;height:1px;background:#fff;"></div>
<svg style="left:899px;top:520px" width="13" height="13"><path d="M12 1L1 12M12 5L5 12M12 9L9 12" stroke="#aca899" stroke-width="1"/><path d="M13 2L2 13M13 6L6 13M13 10L10 13" stroke="#fff" stroke-width="1"/></svg>
<span id="r1" class="t" style="left:253px;top:230px;font-size:12px;line-height:14px;">Списък на лицата, включени във файлаза разплащане по дебитни карти</span>
<span id="r2" class="t" style="left:46px;top:255px;font-size:12px;line-height:14px;letter-spacing:0.12px;">дата:03.08.2010  г.</span>
<span id="r3" class="t" style="left:46px;top:269px;font-size:12px;line-height:14px;letter-spacing:0.06px;">Име на наредителя: <b>Фирма 1</b></span>
<span id="r4" class="t" style="left:46px;top:283px;font-size:12px;line-height:14px;letter-spacing:0.35px;">IBAN:БГ000111222333444555</span>
<div style="left:46px;top:308px;width:820px;height:1px;background:repeating-linear-gradient(90deg,#000 0,#000 3px,transparent 3px,transparent 5.750px);"></div>
<span class="t" style="left:55.5px;top:315px;font-size:12px;line-height:14px;letter-spacing:-0.04px;">№</span>
<span class="t" style="left:95.5px;top:315px;font-size:12px;line-height:14px;transform-origin:0 0;transform:scaleX(0.9656);">BIC</span>
<span class="t" style="left:179.5px;top:315px;font-size:12px;line-height:14px;transform-origin:0 0;transform:scaleX(0.9389);">IBAN</span>
<span class="t" style="left:332px;top:315px;font-size:12px;line-height:14px;letter-spacing:-0.17px;">ЕГН</span>
<span class="t" style="left:440px;top:315px;font-size:12px;line-height:14px;transform-origin:0 0;transform:scaleX(0.9308);">ИМЕ</span>
<span class="t" style="left:476px;top:315px;font-size:12px;line-height:14px;letter-spacing:-0.23px;">ПРЕЗИМЕ</span>
<span class="t" style="left:542px;top:315px;font-size:12px;line-height:14px;letter-spacing:-0.14px;">ФАМИЛИЯ</span>
<span class="t" style="left:712.5px;top:315px;font-size:12px;line-height:14px;letter-spacing:-0.19px;">СУМА</span>
<div style="left:46px;top:335px;width:820px;height:1px;background:repeating-linear-gradient(90deg,#000 0,#000 3px,transparent 3px,transparent 5.750px);"></div>
<span class="t" style="left:58px;top:336px;font-size:12px;line-height:14px;">1</span>
<span id="bic" class="t" style="left:95.5px;top:338px;font-size:12px;line-height:14px;letter-spacing:-0.07px;">TTBBBG22</span>
<span id="ib" class="t" style="left:179.5px;top:338px;font-size:12px;line-height:14px;letter-spacing:1.52px;">11111111111111111111</span>
<span id="egn" class="t" style="left:332px;top:338px;font-size:12px;line-height:14px;letter-spacing:0.42px;">6601021111</span>
<span id="nm" class="t" style="left:440px;top:338px;font-size:12px;line-height:14px;letter-spacing:0.21px;">ИванкаИвановаИванова</span>
<span id="sm" class="t" style="left:771.75px;top:338px;font-size:12px;line-height:14px;">222.14 лв.</span>
<span id="r5" class="t" style="left:46px;top:356px;font-size:12px;line-height:14px;letter-spacing:0.12px;">ОБЩО   ОСНОВАНИЕ:</span>
<span id="r6" class="t" style="left:46px;top:373px;letter-spacing:0.47px;">Заплата за месец Август 2010</span>
<span id="r7" class="t" style="left:46px;top:393.5px;font-size:12px;line-height:14px;">ОБЩО    1  БРОЯ ЗАПИСИ ЗА ОБЩА СУМА    222.14  лв.</span>
<span id="r8" class="t" style="left:46px;top:421px;font-size:12px;line-height:14px;letter-spacing:-0.03px;">Печат и подписи на упълномощените лица:</span>
<span id="r9" class="t" style="left:473px;top:421px;font-size:12px;line-height:14px;letter-spacing:0.04px;">Управител  /  Директор:</span>
<span class="t" style="left:615.5px;top:421px;font-size:12px;line-height:14px;transform-origin:0 0;transform:scaleX(0.8967);">................................................</span>
<span id="r10" class="t" style="left:563px;top:433px;font-size:12px;line-height:14px;">/Иван  Иванов  Иванов /</span>
<span id="r11" class="t" style="left:473px;top:453.5px;font-size:12px;line-height:14px;letter-spacing:0.15px;">Главен   счетоводител:</span>
<span class="t" style="left:613.75px;top:453.5px;font-size:12px;line-height:14px;transform-origin:0 0;transform:scaleX(0.8952);">................................................</span>
<span class="t" style="left:565px;top:465px;font-size:12px;line-height:14px;">/  /</span>
<span id="r12" class="t" style="left:473px;top:483px;font-size:12px;line-height:14px;letter-spacing:-0.03px;">Изготвил:</span>
<span class="t" style="left:545px;top:483px;font-size:12px;line-height:14px;transform-origin:0 0;transform:scaleX(0.8936);">................................................</span>
<div style="left:0px;top:0px;width:85px;height:137px;background:#fff;"></div>
<div style="left:0px;top:537.5px;width:85px;height:214px;background:#fff;"></div>
<div style="left:0px;top:137px;width:1px;height:400px;background:linear-gradient(180deg,#804030,#c06030 20%,#303060 50%,#804030 80%,#602020);"></div>
</div></body></html>
